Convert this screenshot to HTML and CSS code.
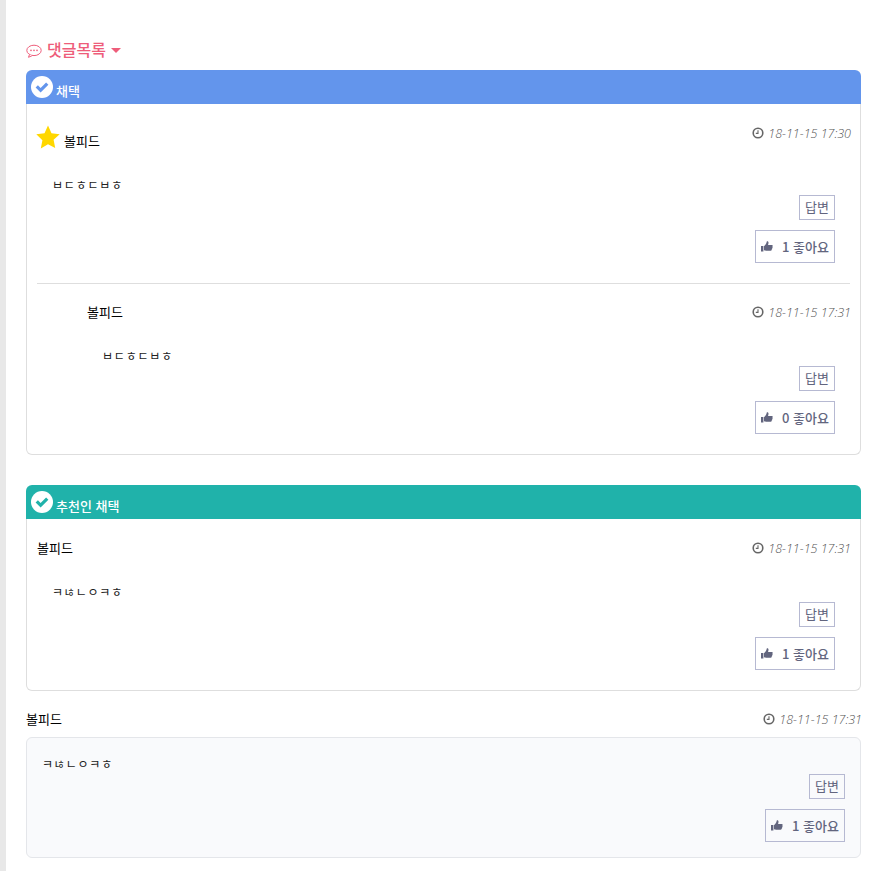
FILE: index.html
```html
<!DOCTYPE html>
<html lang="ko">
<head>
<meta charset="utf-8">
<title>댓글목록</title>
<link rel="stylesheet" href="styles.css">
</head>
<body>
<svg class="sprite" width="0" height="0" aria-hidden="true">
  <symbol id="i-check" viewBox="0 0 22 22"><circle cx="11" cy="11" r="11" fill="#fff"/><path d="M4.600 11.600l2.300-2.300 2.700 2.700 5.500-5.500 2.300 2.300-7.800 7.800z" fill="currentColor"/></symbol>
  <symbol id="i-clock" viewBox="0 0 12 12"><circle cx="6" cy="6" r="4.800" fill="none" stroke="currentColor" stroke-width="1.600"/><path d="M6 3.200V6.400H3.800" fill="none" stroke="currentColor" stroke-width="1.100"/></symbol>
  <symbol id="i-thumb" viewBox="0 0 12 11"><path d="M0 5h2.400v5.400H0zM3 5.200c1.400-.8 2.400-2.400 2.800-4.600.1-.6 1.600-.5 1.700.8.1 1-.3 1.800-.5 2.600h3.600c1.400 0 1.300 1.400.7 1.700.5.500.3 1.300-.2 1.500.3.600 0 1.200-.5 1.400.2.700-.2 1.200-1 1.200H5.200c-.9 0-1.400-.4-2.200-.5z" fill="currentColor"/></symbol>
</svg>
<div class="page">
  <aside class="rail"></aside>
  <main class="content">
    <h2 class="title">
      <svg class="title-icon" viewBox="0 0 16 14"><ellipse cx="8" cy="6.400" rx="7.200" ry="5.200" fill="none" stroke="currentColor" stroke-width="1"/><path d="M3.500 10.500L2.500 13.300 6.500 11.500" fill="#fff" stroke="currentColor" stroke-width="1"/><circle cx="5" cy="6.400" r=".8" fill="currentColor"/><circle cx="8" cy="6.400" r=".8" fill="currentColor"/><circle cx="11" cy="6.400" r=".8" fill="currentColor"/></svg>
      <span>댓글목록</span><i class="caret"></i>
    </h2>

    <section class="card card-blue">
      <header class="card-head"><svg class="check"><use href="#i-check"/></svg><span>채택</span></header>
      <div class="card-body">
        <article class="comment">
          <div class="meta meta-star">
            <div class="author"><svg class="star" viewBox="0 0 24 24"><path d="M12 .6l3.500 7.600 8.200 1-6.100 5.600 1.600 8.200L12 19.300 4.800 23.500l1.600-8.200L.3 9.200l8.200-1z" fill="#ffd700"/></svg><span>볼피드</span></div>
            <time class="date"><svg class="clock"><use href="#i-clock"/></svg>18-11-15 17:30</time>
          </div>
          <p class="text">ㅂㄷㅎㄷㅂㅎ</p>
          <div class="actions">
            <button class="btn">답변</button>
            <button class="btn like"><svg class="thumb"><use href="#i-thumb"/></svg><b>1 좋아요</b></button>
          </div>
        </article>
        <hr class="divider">
        <article class="comment reply">
          <div class="meta">
            <div class="author"><span>볼피드</span></div>
            <time class="date"><svg class="clock"><use href="#i-clock"/></svg>18-11-15 17:31</time>
          </div>
          <p class="text">ㅂㄷㅎㄷㅂㅎ</p>
          <div class="actions">
            <button class="btn">답변</button>
            <button class="btn like"><svg class="thumb"><use href="#i-thumb"/></svg><b>0 좋아요</b></button>
          </div>
        </article>
      </div>
    </section>

    <section class="card card-green">
      <header class="card-head"><svg class="check"><use href="#i-check"/></svg><span>추천인 채택</span></header>
      <div class="card-body">
        <article class="comment">
          <div class="meta">
            <div class="author"><span>볼피드</span></div>
            <time class="date"><svg class="clock"><use href="#i-clock"/></svg>18-11-15 17:31</time>
          </div>
          <p class="text">ㅋㄶㄴㅇㅋㅎ</p>
          <div class="actions">
            <button class="btn">답변</button>
            <button class="btn like"><svg class="thumb"><use href="#i-thumb"/></svg><b>1 좋아요</b></button>
          </div>
        </article>
      </div>
    </section>

    <article class="plain">
      <div class="meta">
        <div class="author"><span>볼피드</span></div>
        <time class="date"><svg class="clock"><use href="#i-clock"/></svg>18-11-15 17:31</time>
      </div>
      <div class="plain-box">
        <p class="text">ㅋㄶㄴㅇㅋㅎ</p>
        <div class="actions">
          <button class="btn">답변</button>
          <button class="btn like"><svg class="thumb"><use href="#i-thumb"/></svg><b>1 좋아요</b></button>
        </div>
      </div>
    </article>
  </main>
</div>
</body>
</html>
```
FILE: styles.css
```css
* { box-sizing: border-box; }
html, body { margin: 0; background: #fff; overflow: hidden; }
body { font-family: "Noto Sans CJK KR", "Open Sans", sans-serif; font-size: 13px; color: #000; }
.sprite { position: absolute; }
.page { display: flex; height: 871px; }
.rail { width: 6px; background: #e8e8e8; flex: none; }
.content { width: 835px; margin-left: 20px; padding-top: 39px; flex: none; }

.title { display: flex; align-items: center; height: 20px; margin: 0 0 11px; font-size: 16px; font-weight: 500; color: #ee5d7a; line-height: 20px; }
.title-icon { width: 16px; height: 14px; margin-right: 5px; margin-top: 4px; }
.caret { width: 0; height: 0; margin: 2px 0 0 5px; border-left: 5px solid transparent; border-right: 5px solid transparent; border-top: 5px solid #ee5d7a; }

.card { margin-bottom: 30px; }
.card-head { display: flex; align-items: center; height: 34px; padding-left: 4px; border-radius: 6px 6px 0 0; font-size: 13px; font-weight: 500; color: #fff; }
.card-head span { margin: 7px 0 0 4px; }
.card-blue .card-head { background: #6395ec; color: #fff; }
.card-green .card-head { background: #20b2aa; }
.card-blue .check { color: #6395ec; }
.card-green .check { color: #20b2aa; }
.check { width: 22px; height: 22px; margin-top: -1px; margin-left: 1px; margin-right: -1px; }
.card-body { padding: 0 10px 20px; border: 1px solid #dedede; border-top: 0; border-radius: 0 0 6px 6px; }

.meta { display: flex; justify-content: space-between; align-items: center; height: 20px; }
.meta-star { height: 28px; align-items: flex-start; }
.meta-star .author { height: 28px; align-items: flex-end; }
.author { display: flex; align-items: center; font-size: 13px; font-weight: 400; line-height: 20px; }
.date { display: flex; align-items: center; height: 20px; margin-right: -1px; font-family: "Open Sans", sans-serif; font-size: 12.5px; font-weight: 300; font-style: italic; color: #555; }
.clock { width: 12px; height: 12px; margin-right: 4px; color: #666; }
.star { width: 24px; height: 24px; margin: 0 4px 2px -1px; }

.comment { padding-top: 19px; }
.text { margin: 24px 0 0 15px; height: 20px; font-size: 12px; letter-spacing: .8px; line-height: 20px; color: #222; }
.actions { display: flex; flex-direction: column; align-items: flex-end; gap: 10px; padding-right: 15px; }
.btn { display: flex; align-items: center; height: 25px; padding: 0 5px 2px; border: 1px solid #b6b9d2; background: transparent; font-family: inherit; font-size: 13px; color: #62657e; }
.like { width: 80px; height: 33px; padding-top: 1px; }
.like b { font-weight: 500; margin-left: 9px; font-size: 13px; white-space: nowrap; }
.thumb { width: 12px; height: 11px; margin-top: 1px; color: #62657e; }
.divider { height: 1px; margin: 20px 0 0; border: 0; background: #dedede; }
.reply { padding-top: 18px; }
.reply .meta { padding-left: 50px; }
.reply .text { margin-left: 65px; }

.plain { margin-top: -12px; }
.plain-box { margin-top: 8px; height: 121px; padding: 16px 15px 0; background: #f9fafc; border: 1px solid #e4e6ea; border-radius: 6px; }
.plain-box .text { margin: 0; }
.plain-box .actions { padding-right: 0; }
```
